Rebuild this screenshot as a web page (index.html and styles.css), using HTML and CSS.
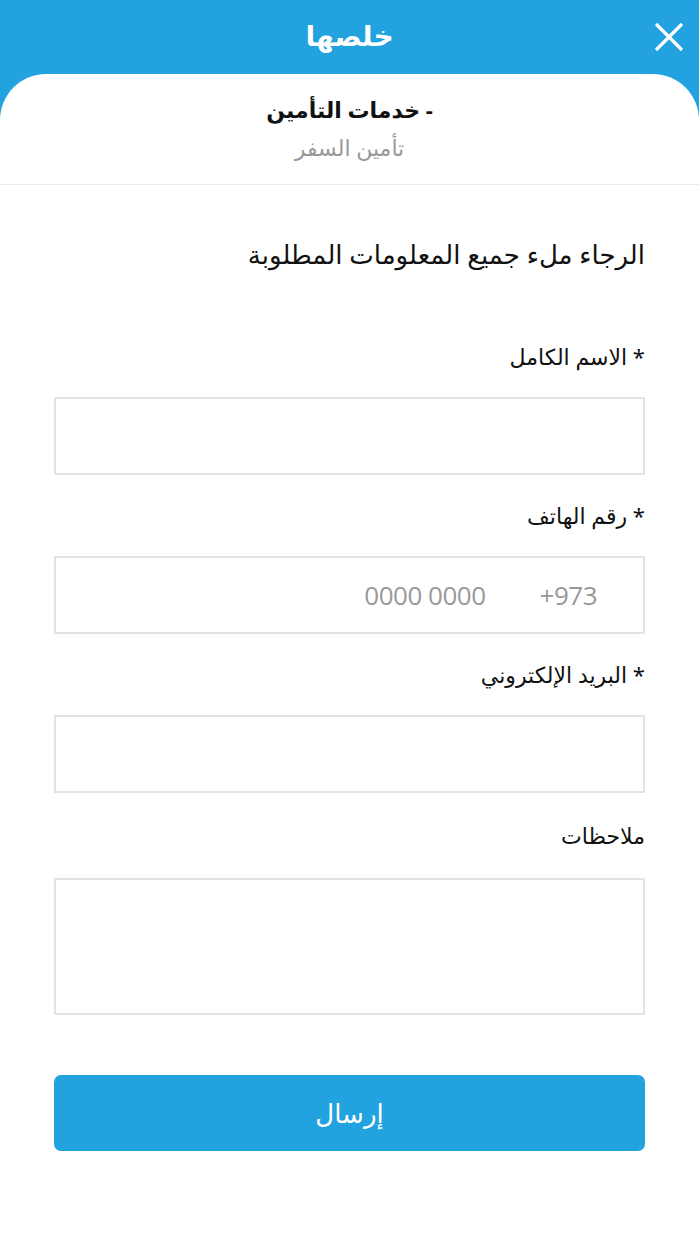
FILE: index.html
```html
<!DOCTYPE html>
<html lang="ar" dir="rtl">
<head>
<meta charset="utf-8">
<title>خلصها</title>
<link rel="stylesheet" href="styles.css">
</head>
<body>
<div class="top">
  <header class="bar">
    <h1 class="brand">خلصها</h1>
    <button class="close" aria-label="close">
      <svg width="30" height="30" viewBox="0 0 30 30"><path d="M2 2 L28 28 M28 2 L2 28" stroke="#fff" stroke-width="3.2" fill="none"/></svg>
    </button>
  </header>
  <div class="card">
    <div class="crumb">- خدمات التأمين</div>
    <div class="sub">تأمين السفر</div>
  </div>
</div>
<main class="form">
  <p class="intro">الرجاء ملء جميع المعلومات المطلوبة</p>
  <div class="field">
    <label class="label">* الاسم الكامل</label>
    <div class="input"></div>
  </div>
  <div class="field">
    <label class="label">* رقم الهاتف</label>
    <div class="input phone"><span class="code">+973</span><span class="ph">0000 0000</span></div>
  </div>
  <div class="field">
    <label class="label">* البريد الإلكتروني</label>
    <div class="input"></div>
  </div>
  <div class="field notes">
    <label class="label">ملاحظات</label>
    <div class="input area"></div>
  </div>
  <button class="submit">إرسال</button>
</main>
</body>
</html>
```
FILE: styles.css
```css
html, body { margin: 0; padding: 0; background: #fff; }
body {
  width: 699px;
  font-family: "Noto Sans", "DejaVu Sans", sans-serif;
  color: #111;
}
.top { background: #22a2df; }
.bar {
  height: 74px;
  display: flex;
  align-items: center;
  justify-content: center;
  position: relative;
}
.brand {
  margin: 0;
  color: #fff;
  font-size: 28px;
  font-weight: 700;
  line-height: 40px;
  margin-top: -4px;
}
.close {
  position: absolute;
  right: 15px;
  top: 22px;
  width: 30px;
  height: 30px;
  padding: 0;
  border: 0;
  background: none;
}
.card {
  background: #fff;
  border-radius: 46px 46px 0 0;
  height: 111px;
  border-bottom: 1px solid #e4eeee;
  display: flex;
  flex-direction: column;
  align-items: center;
  padding-top: 17px;
  box-sizing: border-box;
}
.crumb { font-size: 22px; font-weight: 700; color: #111; line-height: 36px; }
.sub { font-size: 22px; color: #999; line-height: 36px; margin-top: 2px; }
.form {
  padding: 49px 54px 0;
  display: flex;
  flex-direction: column;
}
.intro { margin: 0 0 64px; font-size: 26px; line-height: 40px; color: #111; }
.field { display: flex; flex-direction: column; }
.label { font-size: 22px; line-height: 36px; margin-bottom: 23px; color: #111; }
.input {
  height: 78px;
  border: 2px solid #e3e3e3;
  box-sizing: border-box;
  margin-bottom: 22px;
}
.notes { margin-top: 2px; }
.notes .label { margin-bottom: 25px; }
.phone {
  display: flex;
  align-items: center;
  gap: 54px;
  padding-right: 46px;
  color: #999;
  font-family: "Open Sans", "Liberation Sans", sans-serif;
  font-size: 26px;
  direction: rtl;
}
.phone span { direction: ltr; letter-spacing: -0.5px; }
.area { height: 137px; margin-bottom: 60px; }
.submit {
  height: 76px;
  border: 0;
  border-radius: 7px;
  background: #22a2df;
  color: #fff;
  font-family: inherit;
  font-size: 26px;
}
```
